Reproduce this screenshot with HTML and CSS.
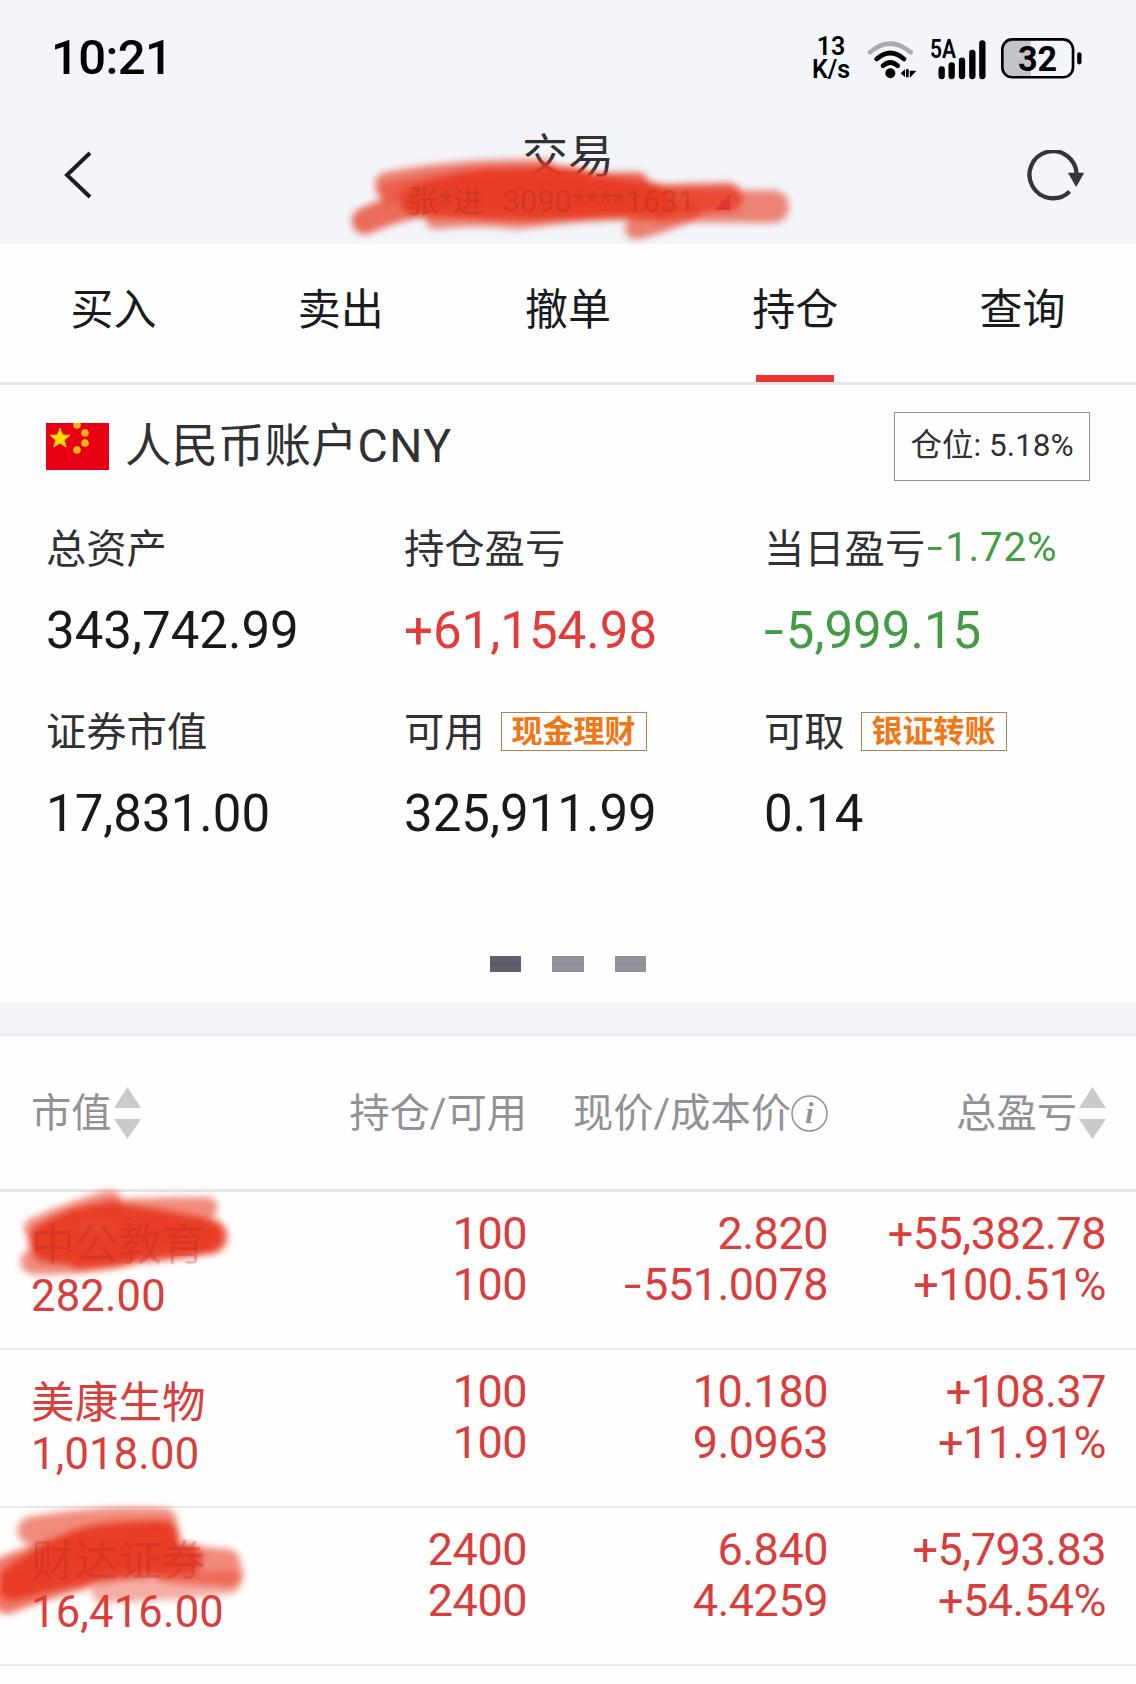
FILE: index.html
```html
<!DOCTYPE html>
<html lang="zh-CN">
	<head>
		<meta charset="utf-8">
		<title>交易</title>
		<link rel="stylesheet" href="styles.css">
	</head>
	<body>
		<header>
			<div class="status">
				<div class="clock">10:21</div>
				<div class="speed"><span>13</span><span>K/s</span></div>
				<svg class="wifi" viewBox="0 0 156 126">
					<g fill="none" stroke="#000" stroke-width="14" stroke-linecap="round">
						<path d="M12 43Q72 -9 134 43" stroke="#a9abaf"/>
						<path d="M32 63Q73 27 114 63"/>
						<path d="M51 83Q73 64 95 83"/>
					</g>
					<circle cx="73" cy="106" r="15"/>
					<path d="M104 106L117 94V117zM120 94h8v24h-8zM131 98h20L132 119z"/>
				</svg>
				<svg class="signal" viewBox="0 0 174 126">
					<text x="0" y="59" textLength="78" lengthAdjust="spacingAndGlyphs">5A</text>
					<path d="M35 94v20M65 82v32M96 68v46M127 45v69M157 16v98" stroke="#000" stroke-width="19" stroke-linecap="round"/>
				</svg>
				<svg class="battery" viewBox="0 0 244 126">
					<path d="M36 5H90V117H36Q6 117 6 87V35Q6 5 36 5z" fill="#c3c4c8"/>
					<rect x="4" y="4" width="213" height="114" rx="30" fill="none" stroke="#000" stroke-width="8"/>
					<path d="M236 49v24" stroke="#000" stroke-width="13" stroke-linecap="round"/>
					<text x="110" y="99" text-anchor="middle" textLength="118" lengthAdjust="spacingAndGlyphs">32</text>
				</svg>
			</div>
			<div class="navbar">
				<svg class="back" viewBox="0 0 28 48">
					<path d="M26 2L3 24L26 46" fill="none" stroke="#1c1d20" stroke-width="4"/>
				</svg>
				<div class="heading">
					<h1>交易</h1>
					<div class="account">
						<span>张*进</span><span>3090****1631</span><i></i>
					</div>
					<svg class="scribble scribble-title" viewBox="0 0 1440 420">
						<path d="M168 224Q380 180 640 186" stroke-width="74" opacity=".65"/>
						<path d="M170 250Q300 220 480 200" stroke-width="60" opacity=".5"/>
						<path d="M102 333Q180 295 320 270" stroke-width="80" opacity=".75"/>
						<path d="M315 325Q440 310 560 325Q800 290 1000 300" stroke-width="66" opacity=".6"/>
						<path d="M700 222L920 220" stroke-width="66" opacity=".8"/>
						<path d="M1000 285Q1180 290 1325 290" stroke-width="98" opacity=".62"/>
						<path d="M915 355Q1000 335 1080 300" stroke-width="66" opacity=".65"/>
						<path d="M900 270Q1100 265 1190 262" stroke-width="88" opacity=".8"/>
						<path d="M255 272Q430 212 600 216Q720 205 780 235L980 275" stroke-width="90" opacity=".97"/>
						<path d="M270 278L600 292L980 275" stroke-width="84" opacity=".96"/>
						<path d="M420 255L960 262" stroke-width="90" opacity=".95"/>
					</svg>
				</div>
				<svg class="refresh" viewBox="0 0 174 160">
					<path d="M149 74A71 71 0 1 0 128 125" fill="none" stroke="#35363a" stroke-width="13"/>
					<path d="M123 69H172L148 112z" fill="#35363a"/>
				</svg>
			</div>
		</header>
		<nav>
			<a>买入</a>
			<a>卖出</a>
			<a>撤单</a>
			<a class="active">持仓</a>
			<a>查询</a>
		</nav>
		<section class="summary">
			<div class="title">
				<svg class="flag" viewBox="0 0 63 47">
					<rect width="63" height="47" fill="#e60012"/>
					<path d="M14 5l2.6 7 7.4.3-5.8 4.6 2 7.1-6.2-4-6.2 4 2-7.1L4 12.300l7.400-.3z" fill="#ffe100" stroke="#ffc800"/>
					<g fill="#f7b515">
						<circle cx="31" cy="2" r="3.800"/>
						<circle cx="39" cy="10" r="3.800"/>
						<circle cx="39" cy="20" r="3.800"/>
						<circle cx="31" cy="27" r="3.800"/>
					</g>
				</svg>
				<h2>人民币账户<span>CNY</span></h2>
				<span class="position">仓位: 5.18%</span>
			</div>
			<div class="figures">
				<div>
					<p>总资产</p>
					<b>343,742.99</b>
				</div>
				<div>
					<p>持仓盈亏</p>
					<b class="up">+61,154.98</b>
				</div>
				<div>
					<p>当日盈亏<span class="down"><span class="minus">-</span>1.72%</span></p>
					<b class="down"><span class="minus">-</span>5,999.15</b>
				</div>
				<div>
					<p>证券市值</p>
					<b>17,831.00</b>
				</div>
				<div>
					<p>可用<span class="tag">现金理财</span></p>
					<b>325,911.99</b>
				</div>
				<div>
					<p>可取<span class="tag">银证转账</span></p>
					<b>0.14</b>
				</div>
			</div>
			<div class="pager"><i class="on"></i><i></i><i></i></div>
		</section>
		<section class="list">
			<div class="row head">
				<div>市值<svg class="sort" viewBox="0 0 27 52"><path d="M13.500 0L27 21H0zM0 32H27L13.500 52z"/></svg></div>
				<div>持仓/可用</div>
				<div>现价/成本价<svg class="info" viewBox="0 0 37 37"><circle cx="18.500" cy="18.500" r="17.500"/><text x="18.500" y="28" text-anchor="middle">i</text></svg></div>
				<div>总盈亏<svg class="sort" viewBox="0 0 27 52"><path d="M13.500 0L27 21H0zM0 32H27L13.500 52z"/></svg></div>
			</div>
			<div class="row">
				<div class="name"><span class="covered">中公教育</span><br>282.00
					<svg class="scribble scribble-first" viewBox="0 0 720 300">
						<path d="M105 145Q230 90 330 64" stroke-width="66" opacity=".6"/>
						<path d="M330 92Q500 82 620 84" stroke-width="66" opacity=".6"/>
						<path d="M100 245Q250 250 400 215" stroke-width="76" opacity=".6"/>
						<path d="M400 165Q550 170 630 170" stroke-width="105" opacity=".85"/>
						<path d="M135 180Q250 110 350 120T615 165" stroke-width="98" opacity=".97"/>
						<path d="M140 200Q280 225 600 180" stroke-width="92" opacity=".96"/>
						<path d="M240 225L360 215" stroke-width="90" opacity=".8"/>
					</svg>
				</div>
				<div>100<br>100</div>
				<div>2.820<br><span class="minus">-</span>551.0078</div>
				<div>+55,382.78<br>+100.51%</div>
			</div>
			<div class="row">
				<div class="name">美康生物<br>1,018.00</div>
				<div>100<br>100</div>
				<div>10.180<br>9.0963</div>
				<div>+108.37<br>+11.91%</div>
			</div>
			<div class="row">
				<div class="name"><span class="covered">财达证券</span><br>16,416.00
					<svg class="scribble scribble-last" viewBox="0 0 780 350">
						<path d="M95 85Q300 50 490 60" stroke-width="84" opacity=".6"/>
						<path d="M310 265Q480 260 685 240" stroke-width="74" opacity=".42"/>
						<path d="M20 290Q120 250 240 220" stroke-width="90" opacity=".7"/>
						<path d="M450 160Q560 170 680 180M500 200Q590 210 690 215" stroke-width="80" opacity=".6"/>
						<path d="M20 200Q120 160 240 130" stroke-width="80" opacity=".7"/>
						<path d="M40 245Q200 120 340 110T490 105" stroke-width="98" opacity=".97"/>
						<path d="M70 240Q250 185 560 170" stroke-width="94" opacity=".94"/>
						<path d="M250 170L480 155" stroke-width="94" opacity=".96"/>
					</svg>
				</div>
				<div>2400<br>2400</div>
				<div>6.840<br>4.4259</div>
				<div>+5,793.83<br>+54.54%</div>
			</div>
		</section>
	</body>
</html>
```
FILE: styles.css
```css
* {
	box-sizing: border-box;
}

body {
	margin: 0;
	background: #fefefe;
	color: #303133;
	font-family: Roboto, "Noto Sans CJK SC", sans-serif;
	overflow-x: hidden;
}

svg {
	display: block;
	flex: none;
}

h1, h2, p {
	margin: 0;
	font-weight: 400;
}

i {
	display: block;
}

.up {
	color: #e33b3a;
}

.down {
	color: #439b43;
}

.minus {
	display: inline-block;
	transform: scaleX(1.4);
	transform-origin: left;
	margin-right: .15em;
}

/* status bar + title */
header {
	height: 244px;
	background: #f3f5fa;
}

.status {
	display: flex;
	align-items: flex-start;
	height: 116px;
	padding: 38px 54px 0 51px;
	color: #000;
}

.clock {
	flex: 1;
	font-size: 49px;
	font-weight: 500;
	line-height: 39px;
	letter-spacing: -.6px;
}

.speed {
	display: flex;
	flex-direction: column;
	width: 44px;
	margin-right: 13px;
	font-size: 25px;
	font-weight: 600;
	line-height: 23px;
	text-align: center;
	margin-top: -3px;
}

.wifi {
	width: 52px;
	height: 42px;
	margin-right: 12px;
}

.signal {
	width: 58px;
	height: 42px;
	margin-right: 13px;
	overflow: visible;
}

.signal text {
	font-size: 76px;
	font-weight: 600;
}

.battery {
	width: 81px;
	height: 42px;
}

.battery text {
	font-size: 104px;
	font-weight: 700;
}

.navbar {
	display: flex;
	justify-content: space-between;
	padding: 0 51px 0 64px;
}

.back {
	width: 28px;
	height: 48px;
	margin-top: 35px;
}

.heading {
	position: relative;
	width: 480px;
	text-align: center;
	margin-left: 22px;
}

h1 {
	margin-top: 16px;
	font-size: 46px;
	line-height: 48px;
	margin-right: 5px;
}

.account {
	position: relative;
	z-index: 1;
	display: flex;
	align-items: center;
	justify-content: center;
	gap: 19px;
	color: rgba(150, 40, 30, .28);
	font-size: 31px;
	line-height: 44px;
	padding-right: 3px;
}

.account i {
	border-left: 16px solid transparent;
	border-bottom: 16px solid #e03530;
}

/* pen marks over private data */
.scribble {
	position: absolute;
	overflow: visible;
	filter: blur(3.500px);
}

.scribble path {
	fill: none;
	stroke: #e83d25;
	stroke-linecap: round;
	stroke-linejoin: round;
}

.scribble-title {
	left: 0;
	top: -6px;
	width: 480px;
	height: 140px;
}

.scribble-first {
	left: 0;
	top: -40px;
	width: 240px;
	height: 100px;
}

.scribble-last {
	left: 0;
	top: -34px;
	width: 260px;
	height: 117px;
}

.covered {
	position: relative;
	z-index: 1;
	color: rgba(180, 35, 30, .28);
}

.refresh {
	width: 58px;
	height: 53px;
	margin-top: 34px;
}

/* tabs */
nav {
	display: grid;
	grid-template-columns: repeat(5, 1fr);
	height: 141px;
	border-bottom: 3px solid #e5e6ea;
}

nav a {
	display: flex;
	flex-direction: column;
	align-items: center;
	justify-content: space-between;
	padding-top: 34px;
	color: #1a1b1d;
	font-size: 43px;
	line-height: 64px;
}

nav .active::after {
	content: "";
	width: 78px;
	height: 7px;
	background: #ee3333;
}

/* account summary */
.summary {
	height: 618px;
	padding: 27px 46px 0;
}

.title {
	display: flex;
	align-items: center;
	height: 69px;
}

.flag {
	width: 63px;
	height: 47px;
}

h2 {
	flex: 1;
	margin-left: 16px;
	font-size: 46.500px;
	line-height: 60px;
	margin-top: -1px;
}

h2 span {
	letter-spacing: 1.500px;
}

.position {
	height: 69px;
	width: 196px;
	border: 1px solid #8f9196;
	font-size: 31.500px;
	line-height: 66px;
	text-align: center;
}

.figures {
	display: grid;
	grid-template-columns: 358px 360px 1fr;
	grid-auto-rows: 183px;
	padding-top: 34px;
}

.figures p {
	display: flex;
	align-items: center;
	height: 60px;
	font-size: 40.300px;
	white-space: nowrap;
}

.figures p .down {
	letter-spacing: .8px;
	margin: 4px 0 0 2px;
}

.figures b {
	display: block;
	margin-top: 24px;
	font-size: 51px;
	font-weight: 400;
	line-height: 64px;
}

.figures b:not([class]) {
	color: #18191b;
}

.tag {
	height: 39px;
	margin: 6px 0 0 16px;
	padding: 0 10px;
	border: 1px solid #b98049;
	color: #ef7716;
	font-size: 31px;
	font-weight: 700;
	line-height: 37px;
}

.pager {
	display: flex;
	justify-content: center;
	gap: 31px;
	margin-top: 75px;
}

.pager i {
	width: 31.500px;
	height: 16px;
	background: linear-gradient(#919299 7px, #85868e 7px, #85868e 8px, #919299 8px);
}

.pager .on {
	background: linear-gradient(#5f606e 7px, #525361 7px, #525361 8px, #5f606e 8px);
}

/* holdings */
.list {
	border-top: 30px solid #f3f5fa;
}

.row {
	display: grid;
	grid-template-columns: 262px 234px 301px 278px;
	height: 158px;
	padding: 16px 31px 0 31px;
	border-bottom: 2px solid #e9eaec;
	color: #d93e3d;
	font-size: 45px;
	line-height: 51px;
	letter-spacing: -.5px;
	text-align: right;
}

.row .name {
	position: relative;
	margin-top: 12px;
	font-size: 43.500px;
	text-align: left;
	letter-spacing: .2px;
}

.row .scribble {
	left: -31px;
}

.head {
	height: 159px;
	padding-top: 1px;
	border-top: 3px solid #ebedef;
	border-bottom: 3px solid #e5e6ea;
	color: #919297;
	font-size: 40.300px;
	letter-spacing: 0;
}

.head div {
	display: flex;
	align-items: center;
	justify-content: flex-end;
}

.head div:first-child {
	justify-content: flex-start;
}

.sort {
	width: 27px;
	height: 52px;
	margin-left: 2px;
	fill: #cacaca;
}

.info {
	width: 37px;
	height: 37px;
}

.info circle {
	fill: none;
	stroke: #919297;
	stroke-width: 1.500px;
}

.info text {
	fill: #919297;
	font: italic bold 30px "Liberation Serif", serif;
}
```
